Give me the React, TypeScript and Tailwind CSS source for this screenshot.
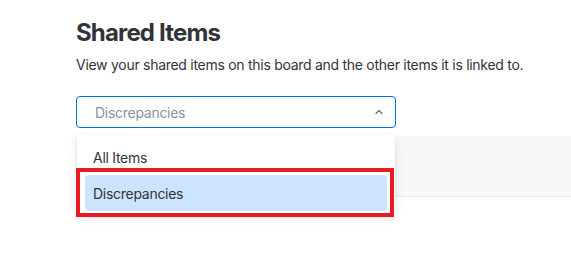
import { ChevronUp } from "lucide-react";

const options = ["All Items", "Discrepancies"];

export default function App() {
  const selected = "Discrepancies";

  return (
    <div className="w-[571px] h-[266px] bg-white overflow-hidden text-[#323338] font-['Inter',sans-serif]">
      <div className="pl-[76px] pt-[17px]">
        <h1 className="text-[24px] leading-[32px] font-bold tracking-[-0.035em]">Shared Items</h1>
        <p className="mt-[6px] text-[14px] leading-[20px] tracking-[-0.02em]">
          View your shared items on this board and the other items it is linked to.
        </p>

        <div className="relative mt-[21px] w-[320px]">
          {/* Select */}
          <button className="flex items-center justify-between w-full h-[32px] pl-[18px] pr-[10px] border border-[#0073ea] rounded-[4px] bg-white">
            <span className="text-[14px] tracking-[-0.02em] text-[#8f909d]">{selected}</span>
            <ChevronUp className="w-[12px] h-[12px] text-[#676879]" strokeWidth={2.4} />
          </button>

          {/* Menu */}
          <div className="absolute z-10 left-[1px] top-[39px] w-[318px] py-[4px] bg-white rounded-[4px] shadow-[0_3px_8px_rgba(0,0,0,0.12)]">
            {options.map((o) => (
              <div
                key={o}
                className={`mx-[8px] h-[36px] px-[8px] flex items-center rounded-[4px] text-[14px] tracking-[-0.02em] ${
                  o === selected ? "bg-[#cce5ff]" : ""
                }`}
              >
                {o}
              </div>
            ))}
          </div>

          {/* Annotation box */}
          <div className="absolute z-20 left-0 top-[72px] w-[318px] h-[49px] border-[4px] border-[#e51d22] pointer-events-none" />
        </div>

        {/* Table area behind */}
        <div className="mt-[8px] h-[61px] bg-[#f7f8fa] border-b border-[#eceef2]" />
      </div>
    </div>
  );
}
